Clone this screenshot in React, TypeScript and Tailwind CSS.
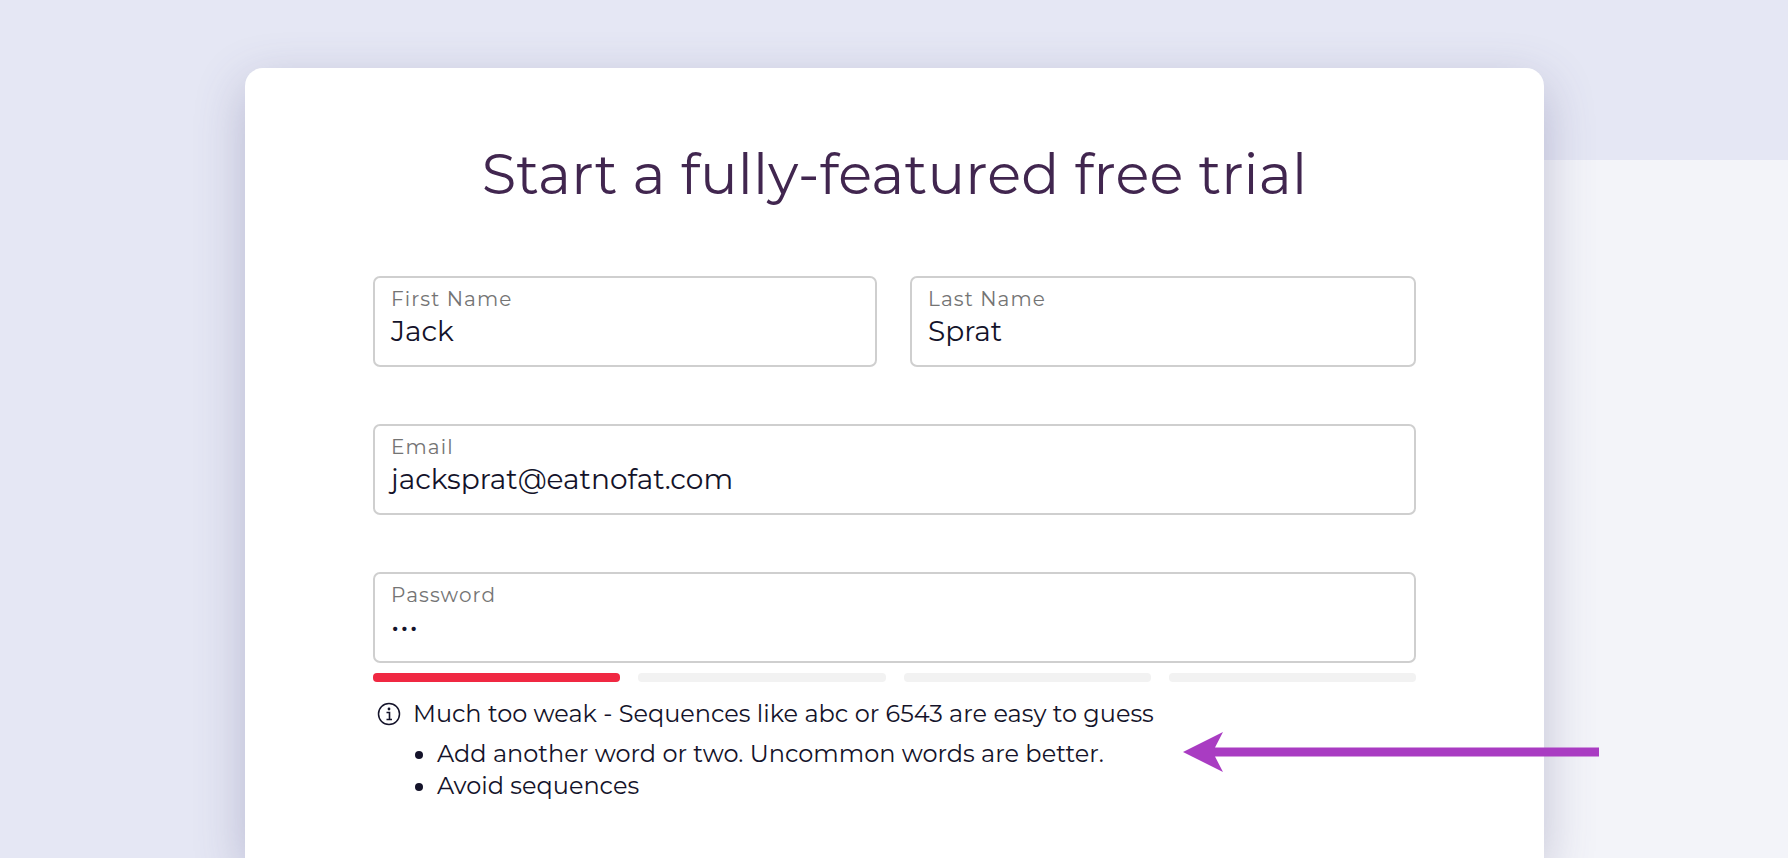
import React from "react";

const font = "font-['Montserrat','Inter','Liberation_Sans',sans-serif]";

type FieldProps = {
  label: string;
  value: string;
  password?: boolean;
};

const Field = ({ label, value, password }: FieldProps) => {
  return (
    <div className="flex h-[91px] flex-col rounded-[7px] border-2 border-[#cfcfcf] bg-white pl-[16px] pt-[9px]">
      <label className="text-[20px] leading-[24px] tracking-[1.1px] text-[#747474]">
        {label}
      </label>
      {password ? (
        <span className="mt-[5px] text-[28px] leading-[30px] tracking-[1px] text-[#14132a]">
          {value}
        </span>
      ) : (
        <span className="mt-[2px] text-[28px] leading-[36px] text-[#14132a]">
          {value}
        </span>
      )}
    </div>
  );
};

const App = () => {
  return (
    <div className={`flex h-[858px] overflow-hidden bg-[#e5e7f4] ${font}`}>
      <div className="relative z-10 ml-[245px] mt-[68px] h-[790px] w-[1299px] shrink-0 rounded-t-[18px] bg-white px-[128px] pt-[72px] shadow-[0_16px_50px_rgba(80,75,130,0.3)]">
        <h1 className="text-center text-[56px] font-normal leading-[68px] tracking-[0.2px] text-[#41264f]">
          Start a fully-featured free trial
        </h1>
        <div className="mt-[68px] flex flex-col gap-[57px]">
          <div className="grid grid-cols-[504px_1fr] gap-[33px]">
            <Field label="First Name" value="Jack" />
            <Field label="Last Name" value="Sprat" />
          </div>
          <Field label="Email" value="jacksprat@eatnofat.com" />
          <div>
            <Field label="Password" value="•••" password />
            <div className="mt-[10px] grid grid-cols-4 gap-[18px]">
              <div className="h-[9px] rounded-[4px] bg-[#f02842]" />
              <div className="h-[9px] rounded-[4px] bg-[#f2f2f2]" />
              <div className="h-[9px] rounded-[4px] bg-[#f2f2f2]" />
              <div className="h-[9px] rounded-[4px] bg-[#f2f2f2]" />
            </div>
          </div>
        </div>
        <div className="mt-[16px] text-[24px] leading-[32px] text-[#14132a]">
          <div className="flex items-center gap-[12px] pl-[4px]">
            <svg
              width="24"
              height="24"
              viewBox="0 0 24 24"
              fill="none"
              stroke="#14132a"
              className="shrink-0"
            >
              <circle cx="12" cy="12" r="10.5" strokeWidth="1.5" />
              <circle cx="12" cy="7" r="1.4" fill="#14132a" stroke="none" />
              <path d="M9.5 10.5h3v7M9.5 17.5h5.5" strokeWidth="1.6" />
            </svg>
            <span>Much too weak - Sequences like abc or 6543 are easy to guess</span>
          </div>
          <ul className="ml-[64px] mt-[8px] list-disc">
            <li>Add another word or two. Uncommon words are better.</li>
            <li>Avoid sequences</li>
          </ul>
        </div>
      </div>
      <div className="mt-[160px] flex-1 bg-[#f3f4f9]" />
      <svg
        className="absolute left-[1183px] top-[732px] z-20"
        width="416"
        height="40"
        viewBox="0 0 416 40"
      >
        <path d="M0 20 L40 0 L32 15.5 H416 V24.5 H32 L40 40 Z" fill="#a93cc2" />
      </svg>
    </div>
  );
};

export default App;
